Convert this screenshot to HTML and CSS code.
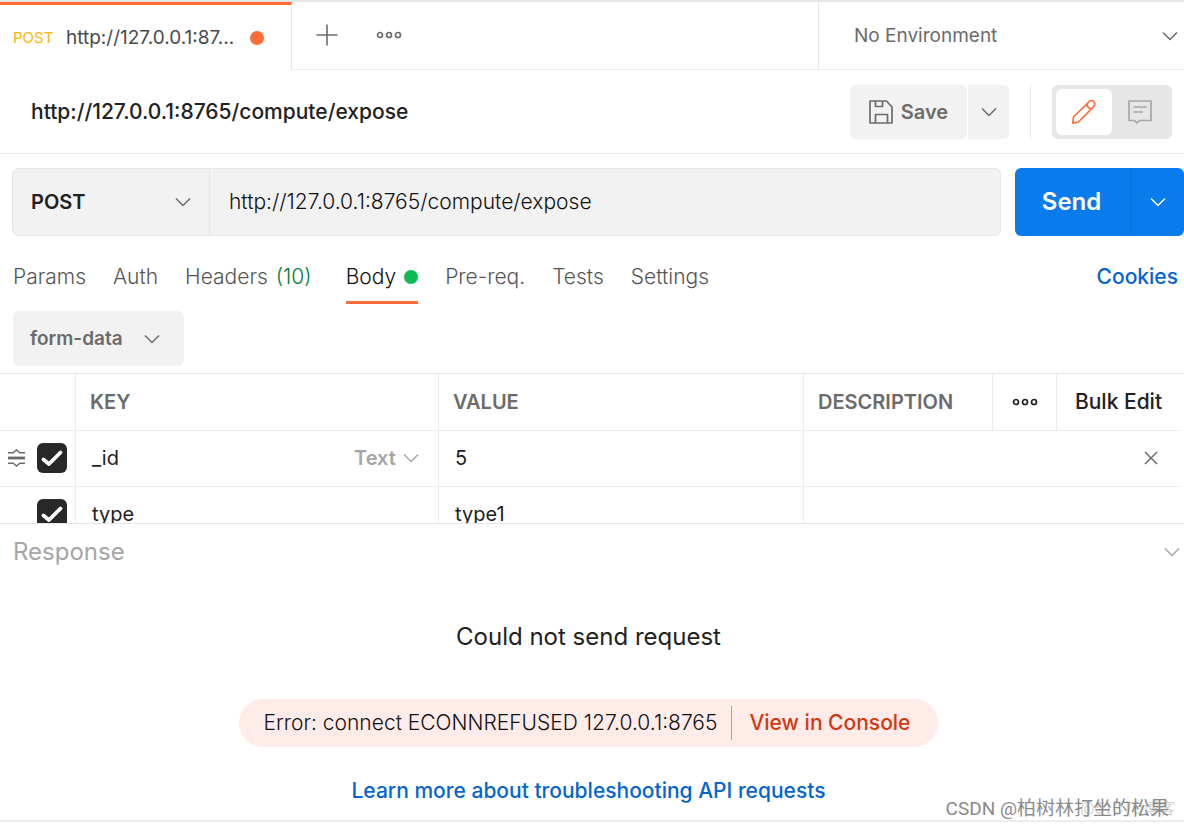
FILE: index.html
```html
<!DOCTYPE html>
<html lang="en">
<head>
<meta charset="utf-8">
<meta name="viewport" content="width=device-width, initial-scale=1">
<title>http://127.0.0.1:8765/compute/expose</title>
<link rel="stylesheet" href="styles.css">
</head>
<body>
<svg class="sprite" aria-hidden="true">
  <symbol id="chevron" viewBox="0 0 16 10"><path d="M1 1.500l7 7 7-7" fill="none" stroke="currentColor" stroke-width="1.500"/></symbol>
  <symbol id="dots" viewBox="0 0 26 10"><g fill="none" stroke="currentColor" stroke-width="1.700"><circle cx="4" cy="5" r="2.500"/><circle cx="13" cy="5" r="2.500"/><circle cx="22" cy="5" r="2.500"/></g></symbol>
  <symbol id="check" viewBox="0 0 30 30"><path d="M6.500 16.500l5.500 4.500L23.500 9.500" fill="none" stroke="currentColor" stroke-width="3.800" stroke-linecap="round" stroke-linejoin="round"/></symbol>
</svg>
<main class="app">
  <header class="topbar">
    <div class="request-tab">
      <span class="tab-method">POST</span>
      <span class="tab-name">http://127.0.0.1:87...</span>
      <span class="dot dot-orange"></span>
    </div>
    <div class="tab-tools">
      <button class="plain" aria-label="New tab"><svg class="icon-plus" viewBox="0 0 22 22"><path d="M11 0.500v21M0.500 11h21" fill="none" stroke="currentColor" stroke-width="1.600"/></svg></button>
      <button class="plain" aria-label="Tab options"><svg class="icon-dots"><use href="#dots"/></svg></button>
    </div>
    <div class="picker env">
      <select aria-label="Environment"><option>No Environment</option></select>
      <svg class="chevron"><use href="#chevron"/></svg>
    </div>
  </header>

  <section class="titlebar">
    <h1>http://127.0.0.1:8765/compute/expose</h1>
    <div class="save-group">
      <button class="save">
        <svg class="icon-save" viewBox="0 0 24 24"><g fill="none" stroke="currentColor" stroke-width="1.700" stroke-linejoin="round"><path d="M1 1h16.500L23 7v16H1z"/><path d="M6.500 1v5.500h7V1M6.500 23v-8.500h12V23"/></g></svg>
        Save
      </button>
      <button class="save-more" aria-label="Save options"><svg class="chevron"><use href="#chevron"/></svg></button>
    </div>
    <div class="mode-group">
      <div class="mode-switch">
        <button class="mode active" aria-label="Edit"><svg class="icon-mode" viewBox="0 0 24 24"><path d="M.800 23.200l.700-6.200L17 1.800a2.900 2.900 0 0 1 5 4.200q-.300.700-1 1.300L6.500 22zM14.500 4.300q1 3.700 4.800 4.700" fill="none" stroke="currentColor" stroke-width="1.700" stroke-linejoin="round"/></svg></button>
        <button class="mode" aria-label="Comments"><svg class="icon-mode" viewBox="0 0 24 24"><path d="M1 1h22v19.500H11.500L9 23l-2.500-2.500H1zM5.500 7h13M5.500 12h9.500" fill="none" stroke="currentColor" stroke-width="1.700" stroke-linejoin="round"/></svg></button>
      </div>
    </div>
  </section>

  <form class="request">
    <div class="address">
      <div class="picker method">
        <select aria-label="Method"><option>POST</option></select>
        <svg class="chevron"><use href="#chevron"/></svg>
      </div>
      <input class="url" type="text" aria-label="Request URL" value="http://127.0.0.1:8765/compute/expose">
    </div>
    <div class="send-group">
      <button class="send" type="button">Send</button>
      <button class="send-more" type="button" aria-label="Send options"><svg class="chevron"><use href="#chevron"/></svg></button>
    </div>
  </form>

  <nav class="sections">
    <button class="section">Params</button>
    <button class="section">Auth</button>
    <button class="section section-headers">Headers <span class="count">(10)</span></button>
    <button class="section current">Body <span class="dot dot-green"></span></button>
    <button class="section">Pre-req.</button>
    <button class="section">Tests</button>
    <button class="section">Settings</button>
    <a class="cookies" href="#cookies">Cookies</a>
  </nav>

  <div class="body-type">
    <div class="picker form-data">
      <select aria-label="Body type"><option>form-data</option></select>
      <svg class="chevron"><use href="#chevron"/></svg>
    </div>
  </div>

  <div class="table-pane">
    <table class="params">
      <colgroup><col class="c-check"><col class="c-key"><col class="c-value"><col class="c-desc"><col class="c-dots"><col></colgroup>
      <thead>
        <tr>
          <th></th><th>KEY</th><th>VALUE</th><th>DESCRIPTION</th>
          <th class="center"><button class="plain dark" aria-label="Columns"><svg class="icon-dots"><use href="#dots"/></svg></button></th>
          <th class="center"><button class="bulk">Bulk Edit</button></th>
        </tr>
      </thead>
      <tbody>
        <tr>
          <td>
            <div class="lead">
              <svg class="icon-drag" viewBox="0 0 18 20"><g fill="none" stroke="currentColor" stroke-width="1.500"><path d="M0 4.500h5.500L9 1.500l3.500 3H18M0 15.500h5.500l3.500 3 3.500-3H18"/><path d="M0 10h18" stroke-width="3"/></g></svg>
              <label class="tick"><input type="checkbox" checked aria-label="Include _id"><svg><use href="#check"/></svg></label>
            </div>
          </td>
          <td>
            <div class="key">
              <span>_id</span>
              <div class="picker kind">
                <select aria-label="Value type"><option>Text</option></select>
                <svg class="chevron"><use href="#chevron"/></svg>
              </div>
            </div>
          </td>
          <td>5</td>
          <td colspan="3"><div class="end"><button class="plain" aria-label="Remove row"><svg class="icon-close" viewBox="0 0 14 14"><path d="M1 1l12 12M13 1L1 13" fill="none" stroke="currentColor" stroke-width="1.500"/></svg></button></div></td>
        </tr>
        <tr>
          <td>
            <div class="lead">
              <label class="tick"><input type="checkbox" checked aria-label="Include type"><svg><use href="#check"/></svg></label>
            </div>
          </td>
          <td>type</td>
          <td>type1</td>
          <td colspan="3"></td>
        </tr>
      </tbody>
    </table>
  </div>

  <section class="response">
    <div class="response-head">
      <h2>Response</h2>
      <button class="plain pale" aria-label="Collapse response"><svg class="chevron"><use href="#chevron"/></svg></button>
    </div>
    <div class="response-body">
      <p class="failed">Could not send request</p>
      <div class="error">
        <span class="error-text">Error: connect ECONNREFUSED 127.0.0.1:8765</span>
        <a class="console" href="#console">View in Console</a>
      </div>
      <a class="learn" href="#learn">Learn more about troubleshooting API requests</a>
    </div>
  </section>
  <div class="marks">
    <span class="mark-small">@51CTO博客</span>
    <span class="mark">CSDN @柏树林打坐的松果</span>
  </div>
</main>
</body>
</html>
```
FILE: styles.css
```css
* { box-sizing: border-box; }
body {
  margin: 0;
  background: #fff;
  color: #212121;
  font-family: Inter, "Noto Sans CJK SC", sans-serif;
  font-size: 20px;
  line-height: 28px;
}
h1, h2, p { margin: 0; font-weight: 400; }
button, select, input { font: inherit; color: inherit; border: 0; margin: 0; padding: 0; background: none; }
a { text-decoration: none; font-size: 21px; font-weight: 500; color: #0265d2; }
svg { display: block; }
.sprite { position: absolute; width: 0; height: 0; }

.app { position: relative; display: flex; flex-direction: column; min-height: 100vh; }
.plain { color: #6b6b6b; display: inline-flex; }
.plain.dark { color: #212121; }
.plain.pale { color: #a6a6a6; }
.chevron { width: 16px; height: 10px; flex: none; }
.icon-dots { width: 26px; height: 10px; }
.icon-plus { width: 22px; height: 22px; }
.dot { width: 14px; height: 14px; border-radius: 50%; flex: none; }
.dot-orange { background: #ff6c37; }
.dot-green { background: #0cbb52; }

.picker { display: grid; align-items: center; }
.picker > * { grid-area: 1 / 1; }
.picker select { appearance: none; width: 100%; height: 100%; outline: 0; }
.picker .chevron { justify-self: end; pointer-events: none; }

.topbar { display: flex; height: 70px; border-top: 2px solid #e6e6e6; }
.request-tab {
  display: flex; align-items: center;
  width: 292px; padding-left: 13px;
  border-top: 3px solid #ff6c37; border-right: 1px solid #e6e6e6;
}
.tab-method { width: 53px; color: #ffb400; font-size: 15px; }
.tab-name { font-size: 19px; margin-right: 16px; color: #4a4a4a; }
.tab-tools { flex: 1; display: flex; align-items: center; gap: 38px; padding: 0 0 2px 24px; border-bottom: 1px solid #ededed; }
.env { width: 366px; padding: 0 6px 0 35px; border-left: 1px solid #e6e6e6; border-bottom: 1px solid #ededed; color: #6b6b6b; font-size: 19px; }

.titlebar { display: flex; align-items: center; height: 84px; padding: 0 12px 0 31px; border-bottom: 1px solid #ededed; }
.titlebar h1 { flex: 1; font-size: 21px; line-height: 28px; font-weight: 500; }
.save-group { display: flex; gap: 1px; color: #6b6b6b; }
.save-group button { display: flex; align-items: center; justify-content: center; height: 54px; background: #f2f2f2; border-radius: 6px; }
.save { width: 117px; gap: 8px; font-weight: 600; }
.save-group .save-more { width: 41px; border-radius: 0 6px 6px 0; }
.icon-save { width: 24px; height: 24px; }
.mode-group { margin-left: 21px; padding-left: 21px; border-left: 1px solid #e6e6e6; }
.mode-switch { display: flex; padding: 4px; height: 54px; width: 120px; background: #e6e6e6; border-radius: 6px; }
.mode { flex: 1; display: flex; align-items: center; justify-content: center; border-radius: 6px; color: #a6a6a6; }
.mode.active { background: #fff; color: #ff6c37; }
.icon-mode { width: 24px; height: 24px; }

.request { display: flex; gap: 14px; padding: 14px 0 0 12px; }
.address { flex: 1; display: flex; height: 68px; background: #f2f2f2; border: 1px solid #e6e6e6; border-radius: 6px; }
.method { width: 197px; padding: 0 18px; border-right: 1px solid #e6e6e6; font-weight: 600; }
.method .chevron { color: #6b6b6b; }
.url { flex: 1; min-width: 0; padding: 0 19px; outline: 0; font-size: 21px; font-weight: 300; color: #111; }
.send-group { display: flex; width: 169px; height: 68px; border-radius: 6px; overflow: hidden; background: #097bed; color: #fff; }
.send { flex: 1; padding-right: 2px; font-size: 24px; font-weight: 600; }
.send-more { width: 54px; display: flex; align-items: center; justify-content: center; border-left: 1px solid #0a6fd8; }

.sections { display: flex; gap: 27px; padding: 13px 6px 0 13px; color: #555; font-size: 21px; font-weight: 300; }
.section { display: flex; align-items: center; gap: 8px; height: 55px; border-top: 3px solid transparent; border-bottom: 3px solid transparent; }
.section-headers { margin-right: 7px; }
.section.current { color: #111; border-bottom-color: #ff6c37; }
.count { color: #007f31; }
.cookies { margin-left: auto; align-self: center; }

.body-type { padding: 7px 13px; }
.form-data { width: 171px; height: 55px; padding: 0 24px 0 17px; background: #f2f2f2; border-radius: 6px; color: #6b6b6b; font-size: 19px; font-weight: 600; }

.table-pane { height: 150px; overflow: hidden; border-top: 1px solid #e6e6e6; padding-right: 4px; }
.params { width: 100%; table-layout: fixed; border-collapse: separate; border-spacing: 0; }
.params th, .params td { height: 56px; padding: 0 14px; text-align: left; border-bottom: 1px solid #ededed; border-right: 1px solid #ededed; }
.params tr > :last-child { border-right: 0; }
.params th { height: 57px; color: #6b6b6b; font-weight: 600; }
.params td { padding: 0 14px 2px 16px; }
.params th.center { padding: 0; text-align: center; }
.params th.center .plain { display: flex; justify-content: center; width: 100%; }
.params td:first-child { padding: 0 8px 1px; }
.c-check { width: 76px; }
.c-key { width: 363px; }
.c-value { width: 365px; }
.c-desc { width: 189px; }
.c-dots { width: 64px; }
.bulk { color: #212121; font-size: 21px; font-weight: 500; }
.lead { display: flex; align-items: center; justify-content: flex-end; gap: 12px; }
.icon-drag { width: 18px; height: 20px; color: #6b6b6b; }
.tick { display: grid; width: 30px; height: 30px; color: #fff; }
.tick > * { grid-area: 1 / 1; width: 30px; height: 30px; }
.tick input { appearance: none; background: #282828; border-radius: 6px; }
.tick svg { pointer-events: none; z-index: 1; }
.key { display: flex; justify-content: space-between; }
.kind { width: 70px; padding-right: 5px; color: #a6a6a6; font-weight: 600; }
.end { display: flex; justify-content: flex-end; padding-right: 8px; }
.icon-close { width: 14px; height: 14px; }

.response { border-top: 1px solid #e6e6e6; border-bottom: 2px solid #ededed; padding-bottom: 15px; }
.response-head { display: flex; align-items: center; justify-content: space-between; height: 56px; padding: 0 4px 0 13px; }
.response-head h2 { font-size: 24px; color: #a6a6a6; }
.response-body { display: flex; flex-direction: column; align-items: center; padding: 40px 7px 0 0; }
.failed { font-size: 24px; line-height: 34px; }
.error { display: flex; align-items: center; height: 48px; margin: 45px 0 30px; padding: 0 28px 0 25px; border-radius: 24px; background: #ffebe7; }
.error-text { padding-right: 14px; font-size: 21px; font-weight: 300; color: #111; }
.console { padding-left: 17px; line-height: 34px; border-left: 1px solid #a6a6a6; color: #d13913; }
.marks { position: absolute; right: 9px; bottom: 4px; display: grid; justify-items: end; align-items: center; font-family: Roboto, "Noto Sans CJK SC", sans-serif; pointer-events: none; }
.marks > * { grid-area: 1 / 1; }
.mark { margin-right: 6px; color: #8a8a8a; font-size: 19px; }
.mark-small { color: #d0d0d0; font-size: 16px; }
```
